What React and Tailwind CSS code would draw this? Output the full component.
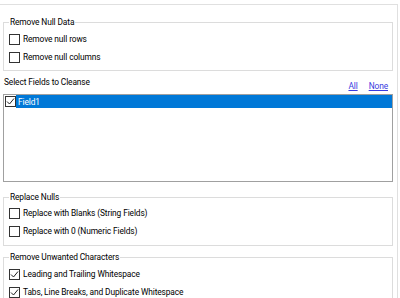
import React from "react";

function CheckBox({ checked }) {
  return (
    <span className="flex h-[11px] w-[11px] shrink-0 items-center justify-center border border-[#333333] bg-white">
      {checked && (
        <svg width="9" height="9" viewBox="0 0 9 9" fill="none">
          <path d="M1 4.5 L3.5 7 L8 1.5" stroke="#222222" strokeWidth="1" />
        </svg>
      )}
    </span>
  );
}

function CheckRow({ label, checked }) {
  return (
    <div className="flex h-[18px] items-center gap-[3px] pl-[5px]">
      <CheckBox checked={checked} />
      <span className="leading-[12px] text-black">{label}</span>
    </div>
  );
}

function GroupBox({ title, className, children }) {
  return (
    <fieldset className={`border border-[#dcdcdc] px-0 ${className}`}>
      <legend className="ml-[5px] px-[1px] leading-[12px] text-black">
        {title}
      </legend>
      {children}
    </fieldset>
  );
}

export default function App() {
  return (
    <div
      className="h-[298px] w-[400px] overflow-hidden bg-white text-[8.4px] tracking-[-0.12px]"
      style={{ fontFamily: 'Roboto, "Noto Sans", sans-serif' }}
    >
      <div className="mt-[4px] h-[300px] w-[398px] border-t border-r border-[#e0e0e0] pl-[3px] pr-[4px]">
        <GroupBox title="Remove Null Data" className="mt-[11px] pt-[2px] pb-[4px]">
          <CheckRow label="Remove null rows" />
          <CheckRow label="Remove null columns" />
        </GroupBox>

        <div className="flex h-[23px] items-start justify-between">
          <span className="mt-[5px] pl-[1px] leading-[12px] text-black">
            Select Fields to Cleanse
          </span>
          <div className="mt-[9px] flex gap-[11px] pr-[5px] leading-[12px]">
            <span className="text-[#3a3ae0] underline">All</span>
            <span className="text-[#3a3ae0] underline">None</span>
          </div>
        </div>

        <div className="h-[88px] border border-[#a0a0a0] bg-white">
          <div className="flex h-[13px] items-center">
            <div className="flex w-[12px] items-center pl-[1px]">
              <CheckBox checked />
            </div>
            <div className="flex h-[13px] flex-1 items-center bg-[#0078d7] pl-[2px] leading-[12px] text-white">
              Field1
            </div>
          </div>
        </div>

        <GroupBox title="Replace Nulls" className="mt-[9px] pt-[1px] pb-[5px]">
          <CheckRow label="Replace with Blanks (String Fields)" />
          <CheckRow label="Replace with 0 (Numeric Fields)" />
        </GroupBox>

        <GroupBox title="Remove Unwanted Characters" className="mt-[5px] pt-[2px] pb-[4px]">
          <CheckRow label="Leading and Trailing Whitespace" checked />
          <CheckRow label="Tabs, Line Breaks, and Duplicate Whitespace" checked />
        </GroupBox>
      </div>
    </div>
  );
}
